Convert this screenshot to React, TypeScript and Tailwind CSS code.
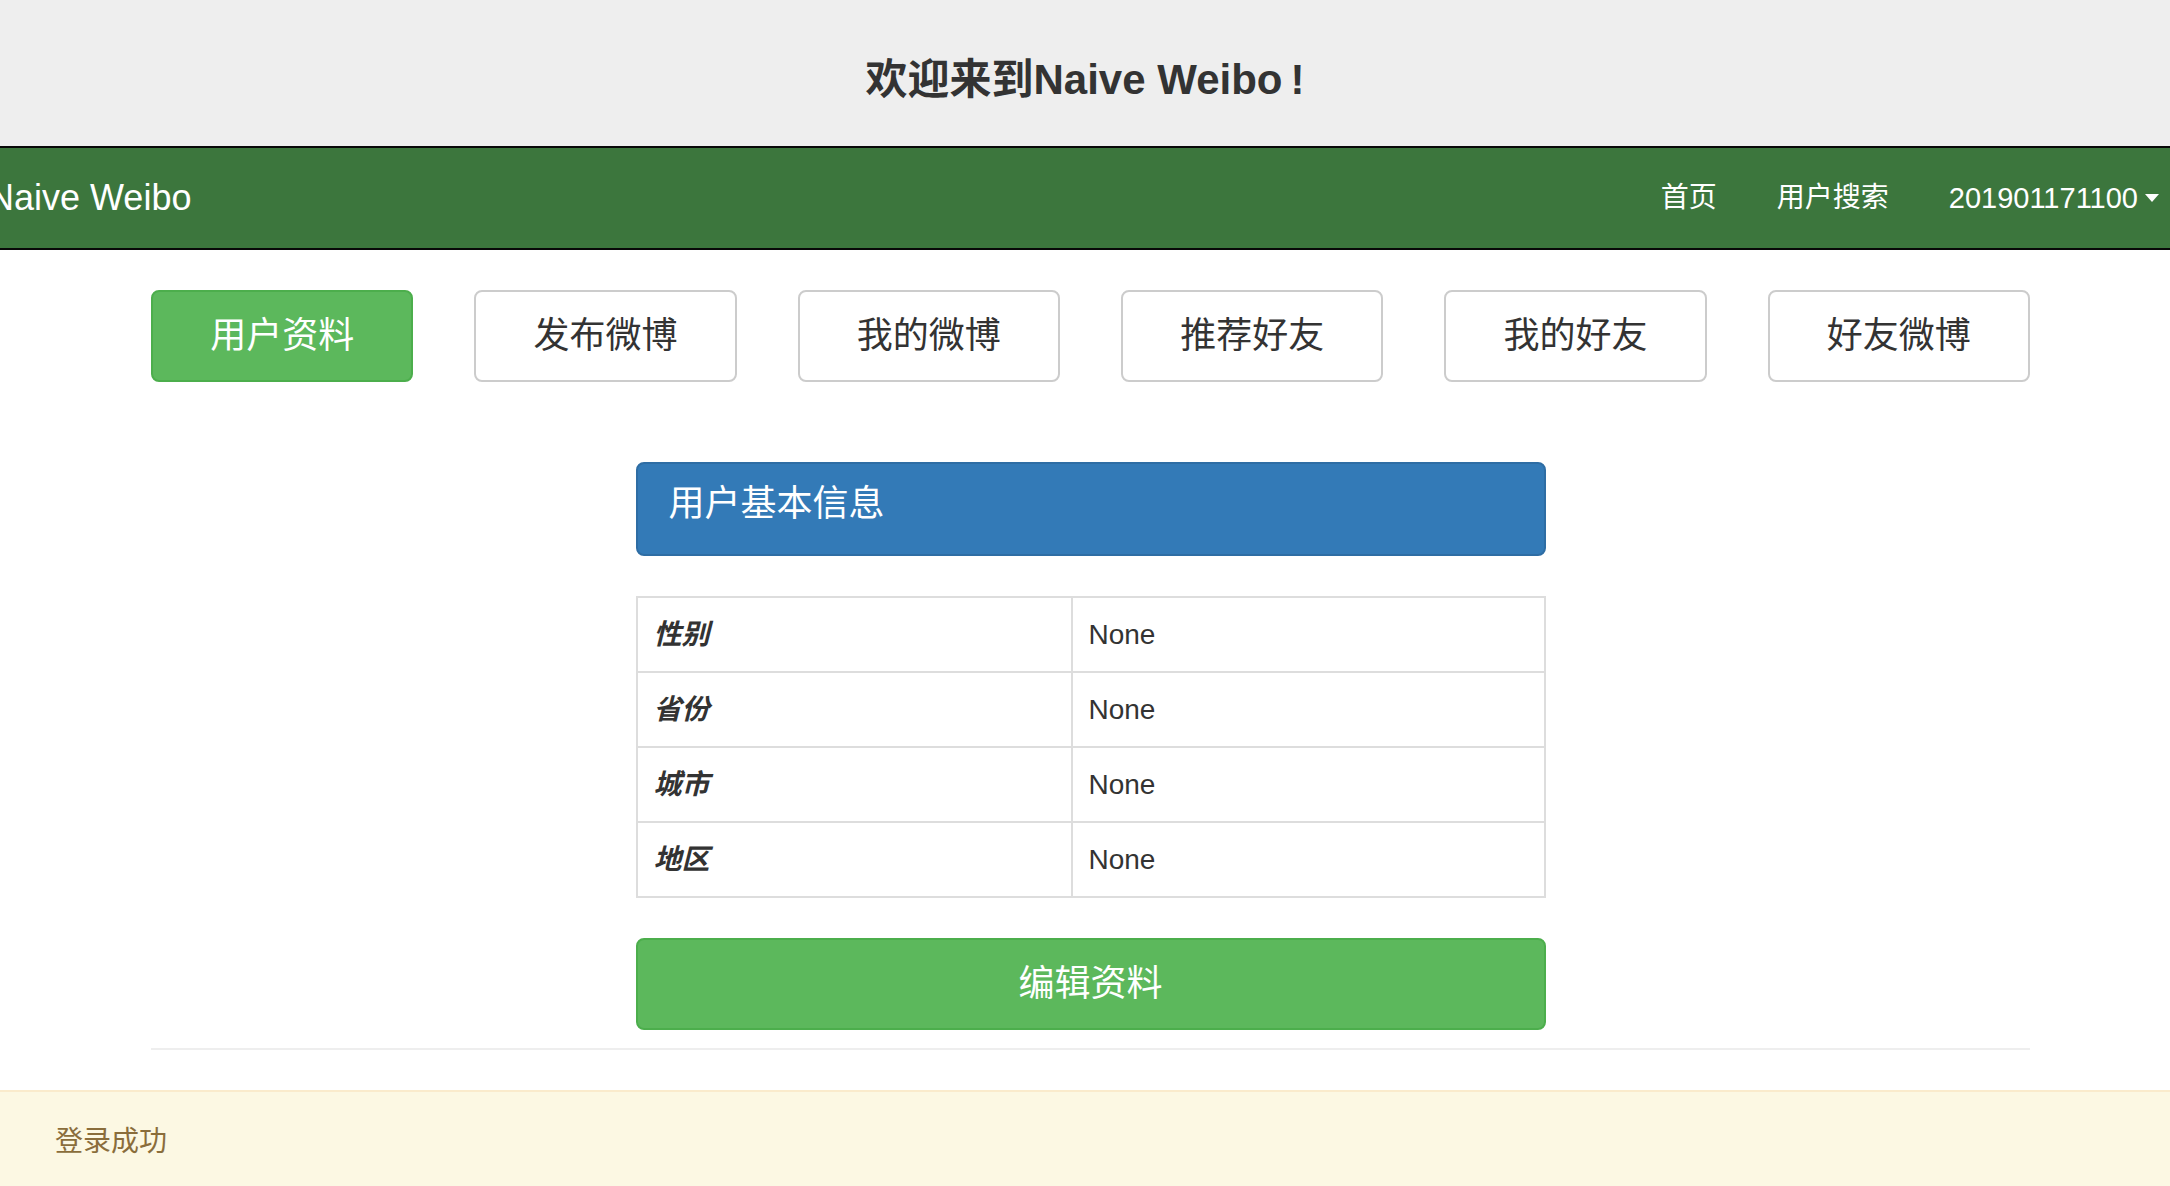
import React from "react";

const tabs = ["用户资料", "发布微博", "我的微博", "推荐好友", "我的好友", "好友微博"];

const rows = [
  { label: "性别", value: "None" },
  { label: "省份", value: "None" },
  { label: "城市", value: "None" },
  { label: "地区", value: "None" },
];

const App: React.FC = () => {
  return (
    <div className="min-h-screen overflow-hidden bg-white font-['Liberation_Sans','Noto_Sans_CJK_SC',sans-serif] text-[#333]">
      {/* top banner */}
      <div className="flex h-[146px] items-center justify-center bg-[#eeeeee] pt-[14px]">
        <h2 className="text-[42px] font-bold leading-[52px] text-[#333]">
          欢迎来到Naive Weibo<span className="ml-[8px]">!</span>
        </h2>
      </div>

      {/* navbar */}
      <nav className="flex h-[104px] items-center justify-between border-y-2 border-[#080808] bg-[#3c763d] text-white">
        <span className="-ml-[12px] text-[36px] leading-[40px]">Naive Weibo</span>
        <div className="flex items-center text-[28px] leading-[40px]">
          <span className="px-[30px]">首页</span>
          <span className="px-[30px]">用户搜索</span>
          <span className="flex items-center pl-[30px] pr-[11px] text-[29px]">
            201901171100
            <span className="ml-[7px] inline-block h-0 w-0 border-x-[7px] border-t-[8px] border-x-transparent border-t-white" />
          </span>
        </div>
      </nav>

      <div className="ml-[151px] w-[1879px] pt-[40px]">
        <div className="grid grid-cols-6 gap-[61px]">
          {tabs.map((t, i) => (
            <button
              key={t}
              className={
                i === 0
                  ? "h-[92px] rounded-[8px] border-2 border-[#4cae4c] bg-[#5cb85c] text-[36px] text-white"
                  : "h-[92px] rounded-[8px] border-2 border-[#cccccc] bg-white text-[36px] text-[#333]"
              }
            >
              {t}
            </button>
          ))}
        </div>

        <div className="mx-auto mt-[80px] w-[910px]">
          <div className="flex h-[94px] items-start rounded-[8px] border-2 border-[#2e6da4] bg-[#337ab7] pl-[31px] pt-[16px] text-[36px] leading-[48px] text-white">
            用户基本信息
          </div>

          <table className="mt-[40px] w-full border-collapse border-2 border-[#dddddd] text-[28px] leading-[40px]">
            <tbody>
              {rows.map((r) => (
                <tr key={r.label} className="h-[75px]">
                  <td className="w-[435px] border-2 border-[#dddddd] px-[16px] font-bold italic">{r.label}</td>
                  <td className="border-2 border-[#dddddd] px-[16px]">{r.value}</td>
                </tr>
              ))}
            </tbody>
          </table>

          <button className="mt-[40px] h-[92px] w-full rounded-[8px] border-2 border-[#4cae4c] bg-[#5cb85c] text-[36px] text-white">
            编辑资料
          </button>
        </div>

        <hr className="mt-[18px] border-t-2 border-[#eeeeee]" />
      </div>

      {/* alert */}
      <div className="mt-[40px] border-t-2 border-[#faebcc] bg-[#fcf8e3] px-[55px] py-[30px] text-[28px] leading-[40px] text-[#8a6d3b]">
        登录成功
      </div>
    </div>
  );
};

export default App;
